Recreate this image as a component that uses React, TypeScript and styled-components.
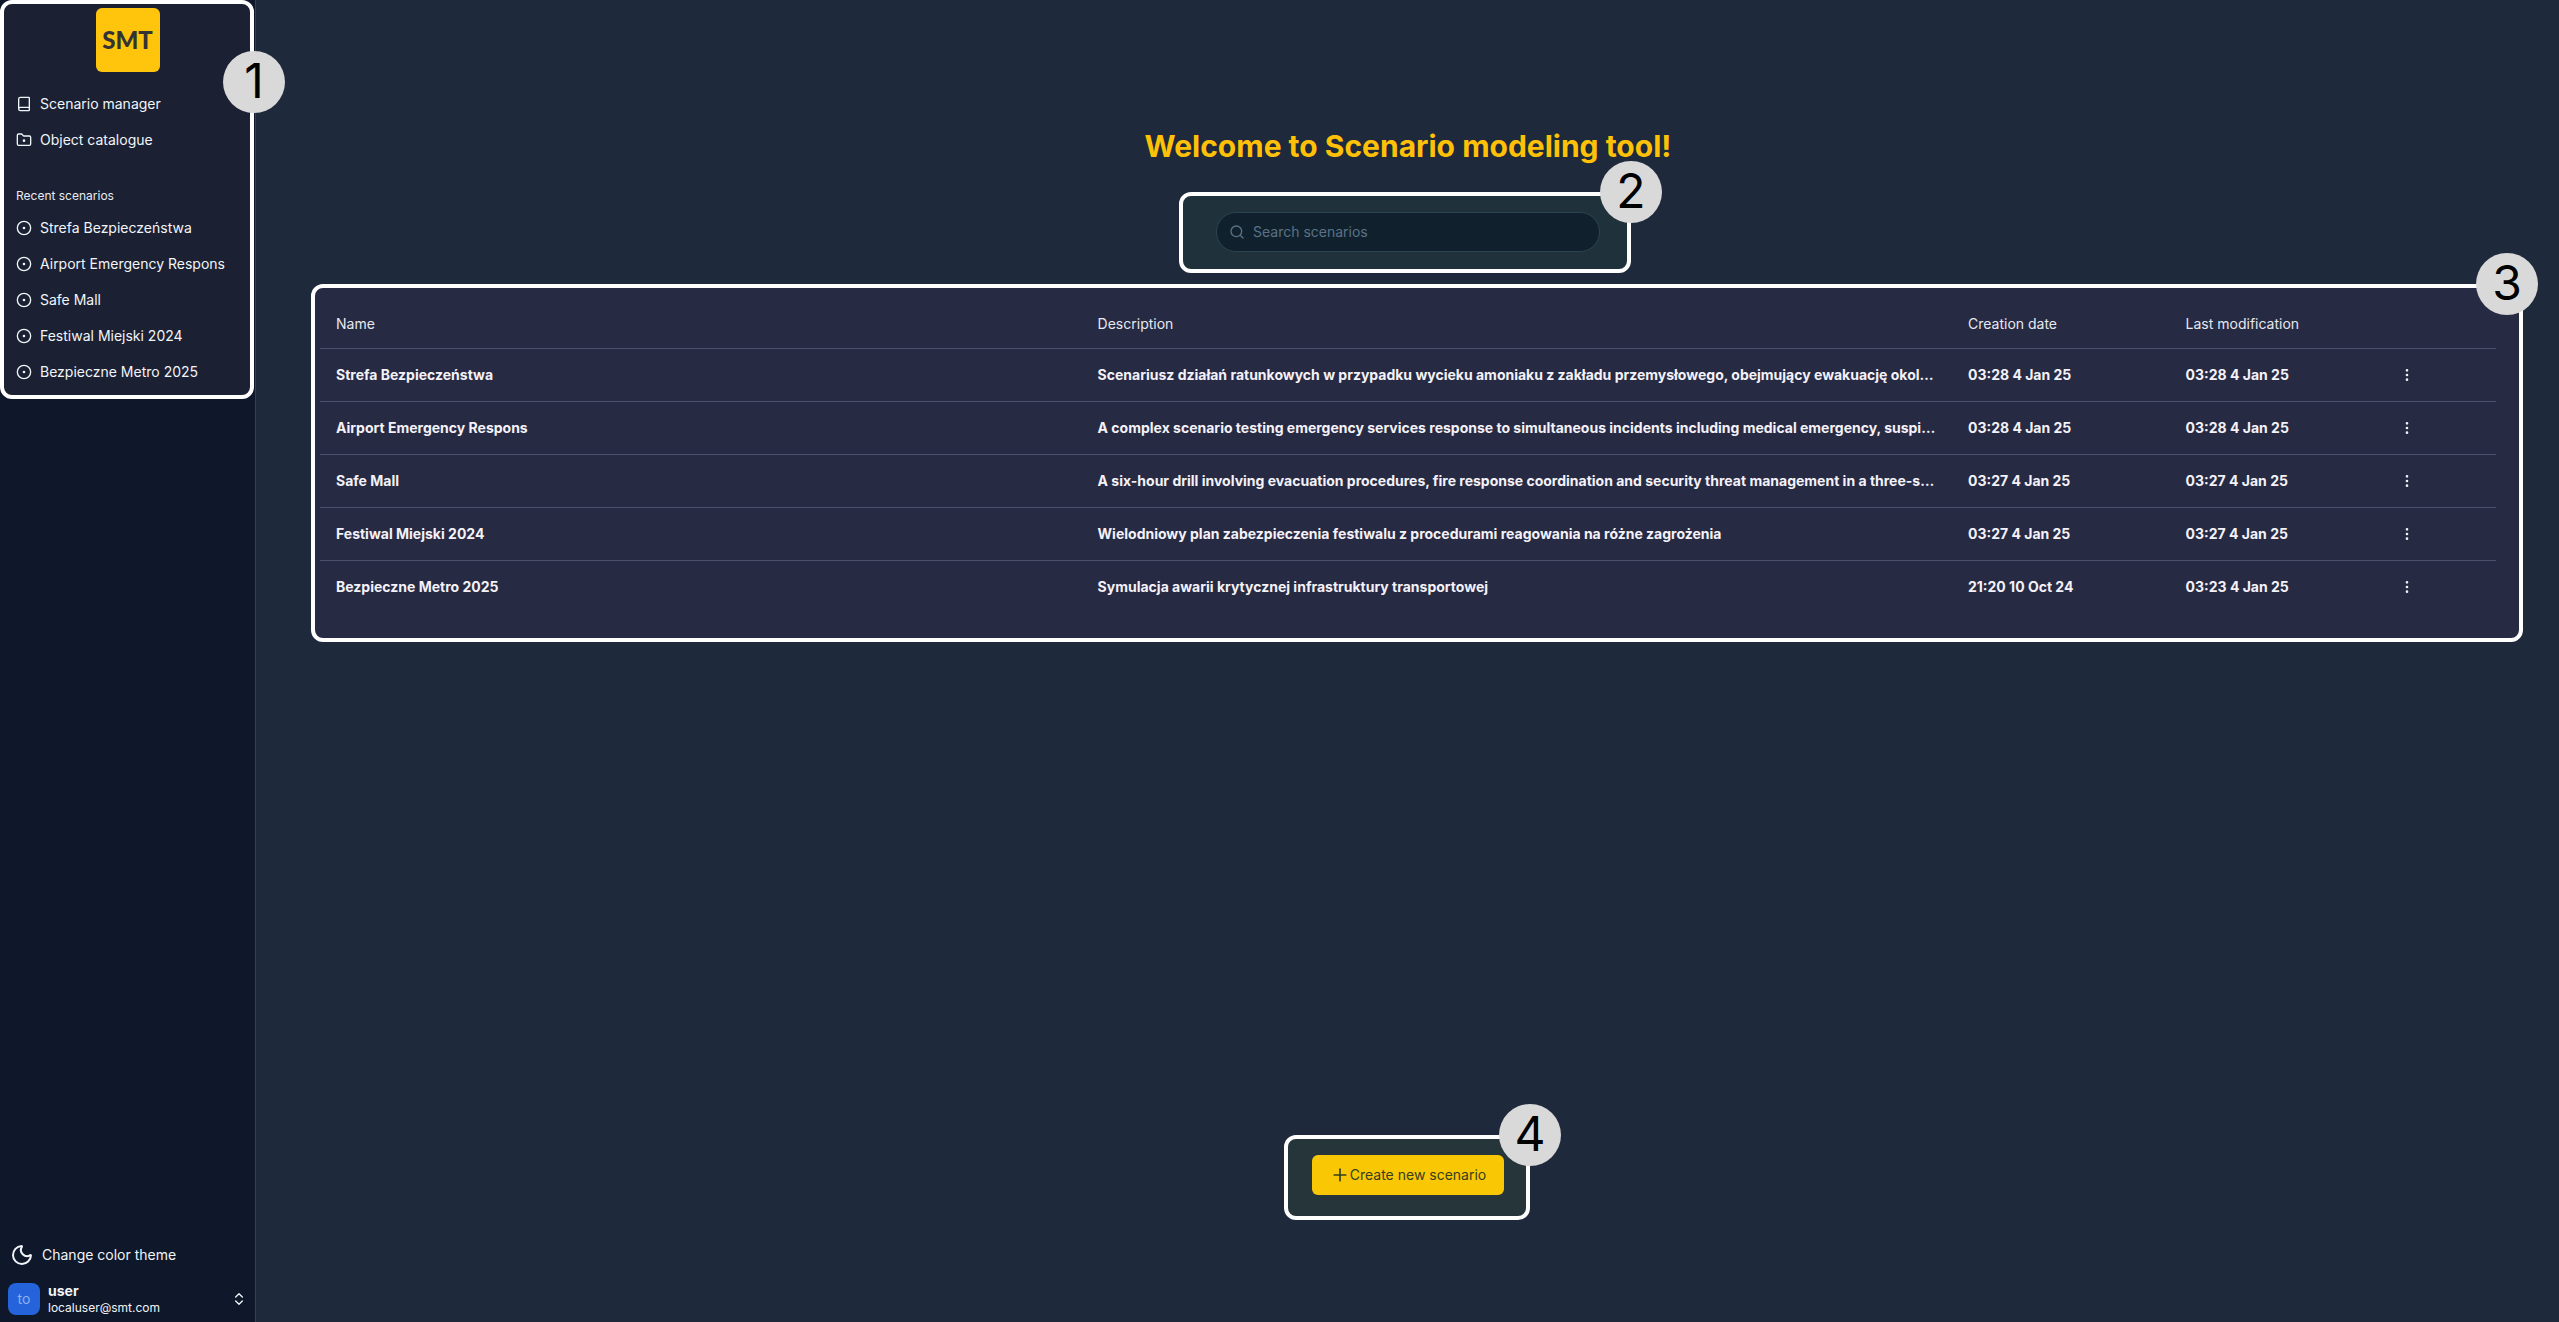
import React from "react";
import styled, { createGlobalStyle } from "styled-components";
import { Book, ChevronsUpDown, CircleDot, EllipsisVertical, FolderDot, Moon, Plus, Search } from "lucide-react";

const GlobalStyle = createGlobalStyle`
  *, *::before, *::after { box-sizing: border-box; }
  body {
    margin: 0;
    background: #1e293b;
    color: #f1f5f9;
    font-family: Inter, "Noto Sans", sans-serif;
    font-size: 14px;
    line-height: 20px;
  }
  button, input { font: inherit; color: inherit; }
  a { color: inherit; text-decoration: none; }
  h1, h2, ul { margin: 0; padding: 0; }
  ul { list-style: none; }
`;

const Layout = styled.div`
  display: flex;
  min-height: 100vh;
`;

/* Highlighted area with a numbered marker on its top right corner */
const Region = styled.div`
  position: relative;
  isolation: isolate;
`;

const Highlight = styled.div<{ $tint: string; $inset: string }>`
  position: absolute;
  z-index: -1;
  inset: ${(p) => p.$inset};
  border: 4px solid #fff;
  border-radius: 12px;
  background: ${(p) => p.$tint};
`;

const Marker = styled.span<{ $shift?: number }>`
  position: absolute;
  top: -35px;
  right: ${(p) => p.$shift ?? -35}px;
  width: 62px;
  height: 62px;
  border-radius: 50%;
  background: #d9d9d9;
  color: #000;
  font-size: 48px;
  line-height: 60px;
  text-align: center;
`;

const Sidebar = styled.aside`
  display: flex;
  flex-direction: column;
  flex: 0 0 256px;
  border-right: 1px solid #334155;
  background: #0f172a;
`;

const SidebarTop = styled(Region)`
  display: flex;
  flex-direction: column;
  z-index: 1;
`;

const SideMarker = styled(Marker)`
  top: 47px;
`;

const LogoRow = styled.div`
  display: flex;
  justify-content: center;
  padding: 8px;
`;

const Logo = styled.div`
  display: flex;
  align-items: center;
  justify-content: center;
  width: 64px;
  height: 64px;
  border-radius: 6px;
  background: #ffc40c;
  color: #333;
  font-family: Lato, sans-serif;
  font-size: 24px;
  font-weight: 900;
`;

const Group = styled.nav`
  padding: 8px;
  & + & { margin-top: 8px; }
`;

const GroupLabel = styled.h2`
  padding: 0 8px;
  font-size: 12px;
  font-weight: 400;
  line-height: 32px;
  color: #e8ebf0;
`;

const Menu = styled.ul`
  display: flex;
  flex-direction: column;
  gap: 4px;
`;

const MenuLink = styled.a`
  display: flex;
  align-items: center;
  gap: 8px;
  height: 32px;
  padding: 0 8px;
  white-space: nowrap;
`;

const SidebarFooter = styled.div`
  display: flex;
  flex-direction: column;
  gap: 8px;
  margin-top: auto;
  padding: 8px 8px 6px;
`;

const PlainButton = styled.button`
  display: flex;
  align-items: center;
  padding: 0;
  border: 0;
  background: none;
  text-align: left;
  cursor: pointer;
`;

const ThemeButton = styled(PlainButton)`
  gap: 8px;
  height: 38px;
  padding: 0 2px;
`;

const UserButton = styled(PlainButton)`
  gap: 8px;
`;

const Avatar = styled.span`
  flex: 0 0 32px;
  border-radius: 8px;
  background: #2563db;
  color: #8fb0ee;
  line-height: 32px;
  text-align: center;
`;

const UserText = styled.span`
  display: flex;
  flex-direction: column;
  flex: 1;
`;

const UserName = styled.span`
  font-weight: 700;
  line-height: 18px;
`;

const UserMail = styled.span`
  font-size: 12px;
  line-height: 16px;
`;

const Main = styled.main`
  display: flex;
  flex: 1;
  flex-direction: column;
  align-items: center;
  gap: 48px;
  min-width: 0;
  padding: 128px 63px 127px 64px;
`;

const Title = styled.h1`
  color: #ffc107;
  font-size: 30px;
  font-weight: 700;
  line-height: 36px;
`;

const SearchBox = styled.label`
  display: flex;
  align-items: center;
  gap: 8px;
  width: 384px;
  height: 40px;
  padding: 0 12px;
  border: 1px solid #2b434f;
  border-radius: 20px;
  background: #10212d;
  color: #5b7286;
`;

const SearchInput = styled.input`
  flex: 1;
  min-width: 0;
  padding: 0;
  border: 0;
  outline: 0;
  background: none;
  &::placeholder { color: #5b7286; opacity: 1; }
`;

const TableRegion = styled(Region)`
  align-self: stretch;
`;

const Table = styled.table`
  width: 100%;
  table-layout: fixed;
  border-collapse: separate;
  border-spacing: 0;
`;

const HeadCell = styled.th<{ $width: string }>`
  width: ${(p) => p.$width};
  height: 49px;
  padding: 0 16px;
  border-bottom: 1px solid #4c506b;
  color: #e6e8f0;
  font-weight: 400;
  text-align: left;
`;

const Cell = styled.td`
  height: 53px;
  padding: 0 16px;
  overflow: hidden;
  border-bottom: 1px solid #4c506b;
  color: #f4f1f8;
  font-weight: 700;
  text-overflow: ellipsis;
  white-space: nowrap;
  tr:last-child > & { border-bottom-color: transparent; }
`;

const ActionCell = styled(Cell)`
  padding: 0 12px;
`;

const CreateRegion = styled(Region)`
  margin-top: auto;
`;

const CreateButton = styled.button`
  display: flex;
  align-items: center;
  justify-content: center;
  width: 192px;
  height: 40px;
  padding: 0;
  border: 0;
  border-radius: 6px;
  background: #f9c704;
  color: #35401f;
  cursor: pointer;
`;

const scenarios = [
  {
    name: "Strefa Bezpieczeństwa",
    description: "Scenariusz działań ratunkowych w przypadku wycieku amoniaku z zakładu przemysłowego, obejmujący ewakuację okol…",
    created: "03:28 4 Jan 25",
    modified: "03:28 4 Jan 25",
  },
  {
    name: "Airport Emergency Respons",
    description: "A complex scenario testing emergency services response to simultaneous incidents including medical emergency, suspi…",
    created: "03:28 4 Jan 25",
    modified: "03:28 4 Jan 25",
  },
  {
    name: "Safe Mall",
    description: "A six-hour drill involving evacuation procedures, fire response coordination and security threat management in a three-s…",
    created: "03:27 4 Jan 25",
    modified: "03:27 4 Jan 25",
  },
  {
    name: "Festiwal Miejski 2024",
    description: "Wielodniowy plan zabezpieczenia festiwalu z procedurami reagowania na różne zagrożenia",
    created: "03:27 4 Jan 25",
    modified: "03:27 4 Jan 25",
  },
  {
    name: "Bezpieczne Metro 2025",
    description: "Symulacja awarii krytycznej infrastruktury transportowej",
    created: "21:20 10 Oct 24",
    modified: "03:23 4 Jan 25",
  },
];

export default function App() {
  return (
    <>
      <GlobalStyle />
      <Layout>
        <Sidebar>
          <SidebarTop>
            <Highlight $tint="#1b2033" $inset="0 1px -3px 0">
              <SideMarker>1</SideMarker>
            </Highlight>
            <LogoRow>
              <Logo>SMT</Logo>
            </LogoRow>
            <Group aria-label="Main">
              <Menu>
                <li><MenuLink href="#manager"><Book size={16} />Scenario manager</MenuLink></li>
                <li><MenuLink href="#catalogue"><FolderDot size={16} />Object catalogue</MenuLink></li>
              </Menu>
            </Group>
            <Group aria-label="Recent scenarios">
              <GroupLabel>Recent scenarios</GroupLabel>
              <Menu>
                {scenarios.map((s) => (
                  <li key={s.name}>
                    <MenuLink href="#scenario"><CircleDot size={16} />{s.name}</MenuLink>
                  </li>
                ))}
              </Menu>
            </Group>
          </SidebarTop>
          <SidebarFooter>
            <ThemeButton type="button"><Moon size={24} />Change color theme</ThemeButton>
            <UserButton type="button">
              <Avatar>to</Avatar>
              <UserText>
                <UserName>user</UserName>
                <UserMail>localuser@smt.com</UserMail>
              </UserText>
              <ChevronsUpDown size={16} />
            </UserButton>
          </SidebarFooter>
        </Sidebar>
        <Main>
          <Title>Welcome to Scenario modeling tool!</Title>
          <Region>
            <Highlight $tint="#1f323c" $inset="-20px -31px -21px -37px">
              <Marker>2</Marker>
            </Highlight>
            <SearchBox>
              <Search size={16} />
              <SearchInput type="text" placeholder="Search scenarios" aria-label="Search scenarios" />
            </SearchBox>
          </Region>
          <TableRegion>
            <Highlight $tint="#262a43" $inset="-16px -27px -28px -9px">
              <Marker $shift={-19}>3</Marker>
            </Highlight>
            <Table>
              <thead>
                <tr>
                  <HeadCell scope="col" $width="35%">Name</HeadCell>
                  <HeadCell scope="col" $width="40%">Description</HeadCell>
                  <HeadCell scope="col" $width="10%">Creation date</HeadCell>
                  <HeadCell scope="col" $width="10%">Last modification</HeadCell>
                  <HeadCell scope="col" $width="5%" aria-label="Actions" />
                </tr>
              </thead>
              <tbody>
                {scenarios.map((s) => (
                  <tr key={s.name}>
                    <Cell>{s.name}</Cell>
                    <Cell>{s.description}</Cell>
                    <Cell>{s.created}</Cell>
                    <Cell>{s.modified}</Cell>
                    <ActionCell>
                      <PlainButton type="button" aria-label={`Actions for ${s.name}`}>
                        <EllipsisVertical size={16} />
                      </PlainButton>
                    </ActionCell>
                  </tr>
                ))}
              </tbody>
            </Table>
          </TableRegion>
          <CreateRegion>
            <Highlight $tint="#25353a" $inset="-20px -26px -25px -28px">
              <Marker>4</Marker>
            </Highlight>
            <CreateButton type="button"><Plus size={20} strokeWidth={2} />Create new scenario</CreateButton>
          </CreateRegion>
        </Main>
      </Layout>
    </>
  );
}
